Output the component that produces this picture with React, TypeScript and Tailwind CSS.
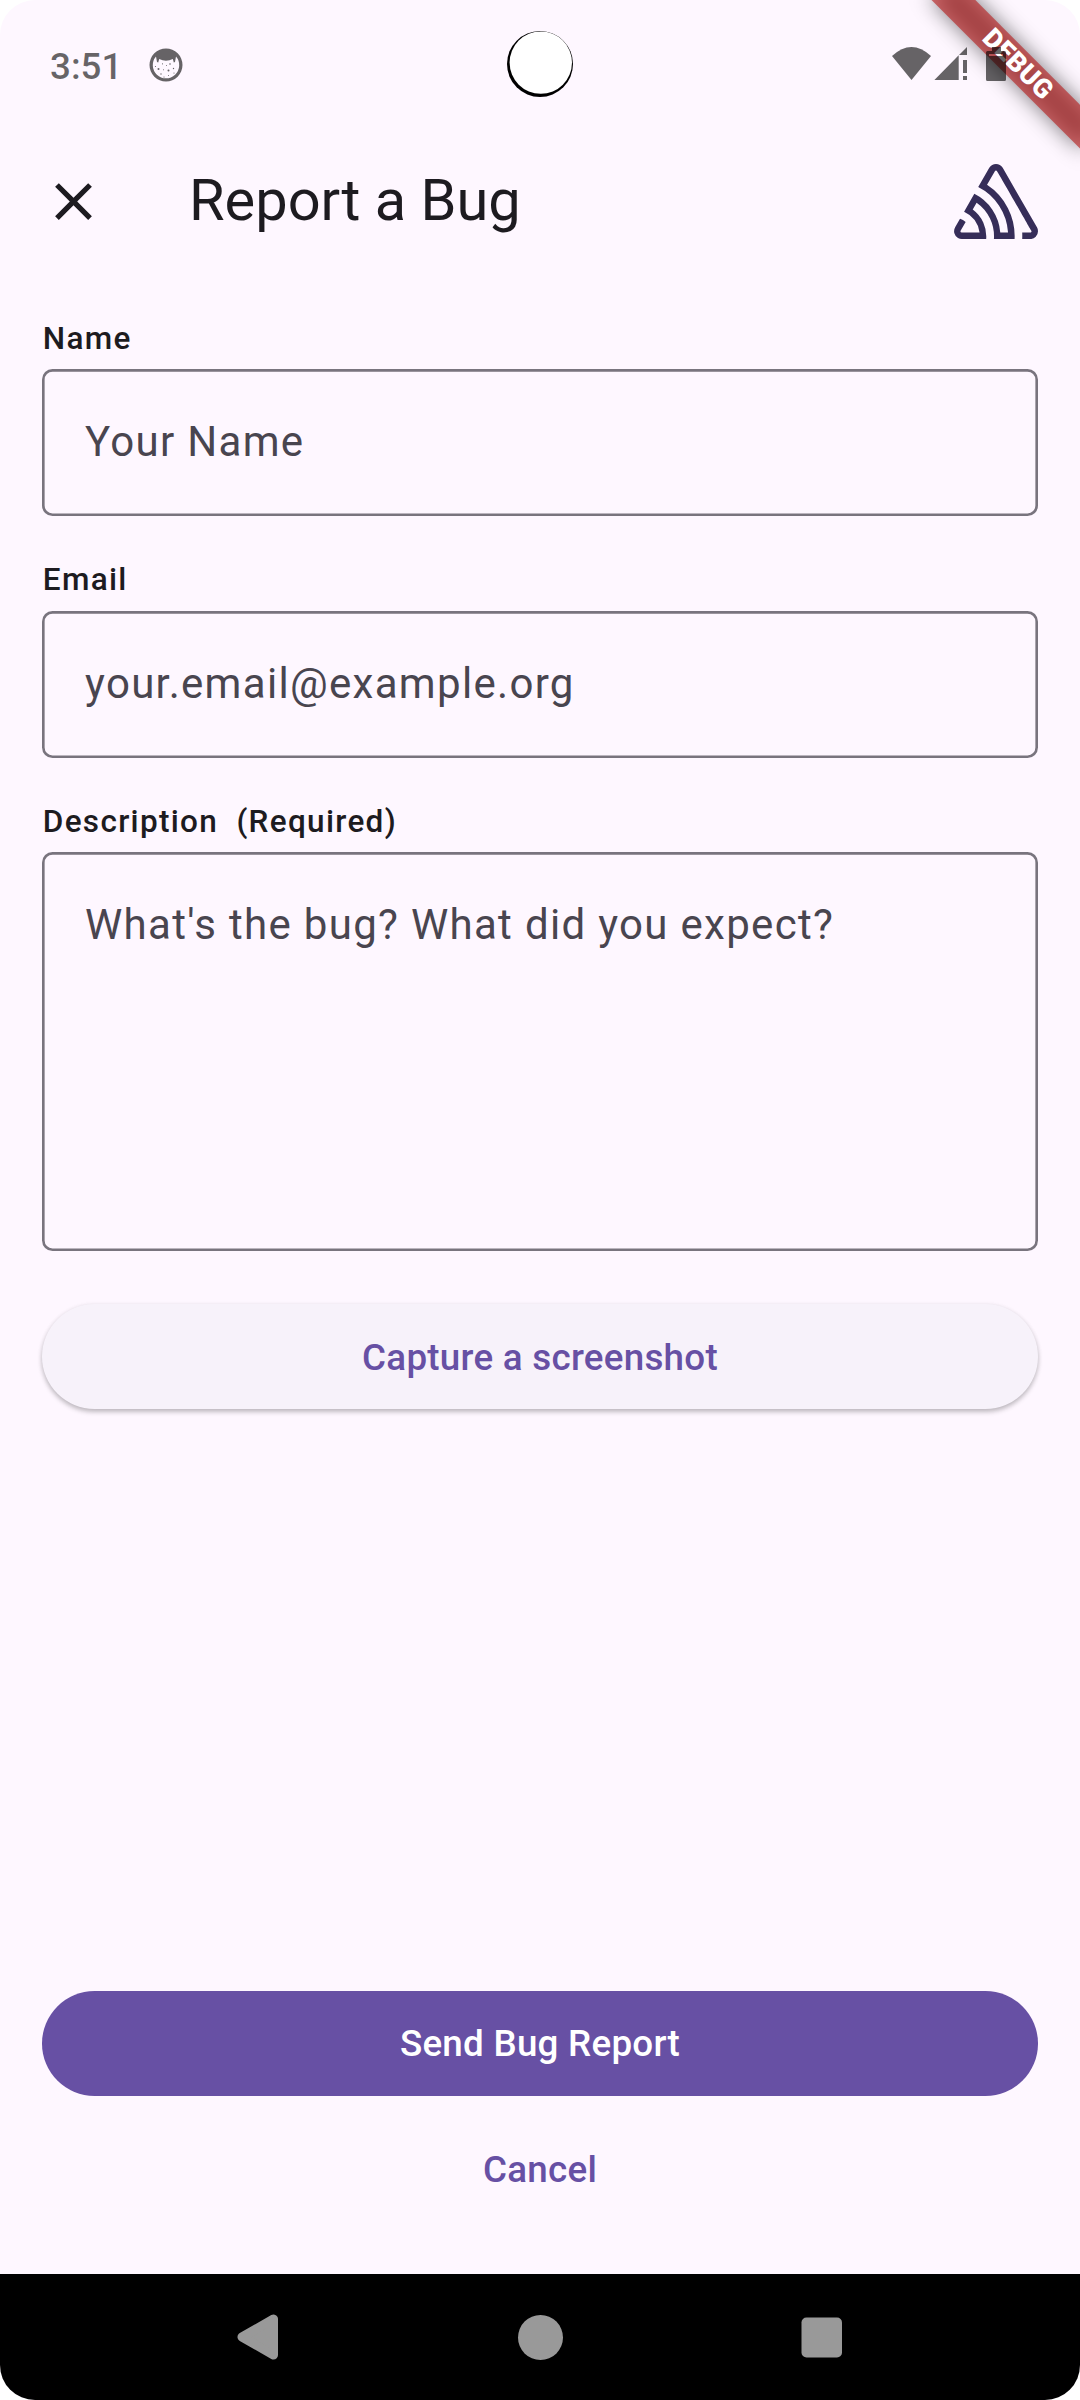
import React from "react";

const inkOverlay = "rgba(0,0,0,0.6)";

function DebugBanner() {
  return (
    <div className="pointer-events-none absolute right-0 top-0 h-[300px] w-[300px] overflow-hidden">
      <div className="absolute left-[300px] top-0 h-0 w-0 rotate-45">
        <div className="absolute left-[-105px] top-[73.5px] h-[31.5px] w-[210px] bg-black/50 blur-[10.4px]" />
        <div className="absolute left-[-105px] top-[73.5px] flex h-[31.5px] w-[210px] items-center justify-center bg-[#b71c1ca0] pl-[3px] text-[26.775px] font-black leading-none tracking-[0.3px] text-white">
          DEBUG
        </div>
      </div>
    </div>
  );
}

function StatusBar() {
  return (
    <div className="relative flex h-[128px] shrink-0 items-center pl-[50px]">
      <span className="pt-[5px] text-[36.75px] font-medium leading-[43px] text-black/60">3:51</span>
      <svg className="absolute left-[144px] top-[42px]" width="44" height="44" viewBox="0 0 44 44" fill={inkOverlay}>
        <path
          fillRule="evenodd"
          d="M22 6.5A16.5 16.5 0 1 1 22 39.5A16.5 16.5 0 1 1 22 6.5ZM12 14.5A13.2 13.2 0 1 0 32 14.5L31 20L29.8 20.5L28.8 17Q22 20.5 15.2 17L14.2 20.5L13 20Z"
        />
        <circle cx="14.5" cy="27" r="1" />
        <circle cx="24.5" cy="28.5" r="1" />
        <circle cx="26" cy="22" r="0.8" />
        <circle cx="18.5" cy="21.8" r="0.6" />
        <circle cx="17" cy="32" r="0.7" />
        <circle cx="20" cy="35" r="0.6" />
        <circle cx="29.5" cy="26.5" r="0.7" />
        <circle cx="22.5" cy="23.6" r="0.5" />
        <circle cx="30" cy="31" r="0.6" />
        <circle cx="19.5" cy="27.8" r="0.5" />
        <circle cx="11.5" cy="24.5" r="0.6" />
        <circle cx="24.5" cy="33.5" r="0.5" />
      </svg>
      <svg className="absolute left-[507px] top-[31px]" width="66" height="66" viewBox="0 0 66 66">
        <circle cx="33" cy="33" r="33" fill="#000" />
        <circle cx="33.8" cy="31.6" r="31.2" fill="#fff" />
      </svg>
      <svg className="absolute left-[886px] top-[36px]" width="130" height="54" viewBox="886 36 130 54" fill={inkOverlay}>
        <path d="M892 56 Q911.5 38 931 56 L911.5 80 Z" />
        <path d="M934.4 80 L958.7 55.3 V80 Z M959 55 L967 47 V55 Z M963 60 H967 V73 H963 Z M963 76 H967 V80 H963 Z" />
        <path
          fillRule="evenodd"
          d="M987.5 51 H992 V47 H1001 V51 H1004.5 Q1006 51 1006 52.5 V79.5 Q1006 81 1004.5 81 H987.5 Q986 81 986 79.5 V52.5 Q986 51 987.5 51 Z M989 54 V56 H1003 V54 Z"
        />
      </svg>
    </div>
  );
}

function Label({ children }: { children: React.ReactNode }) {
  return (
    <div className="mb-[10.5px] h-[42px] whitespace-pre pl-[0.8px] pt-[1.3px] text-[31.5px] font-medium leading-[41.4px] tracking-[1.3125px] text-[#1d1b20]">
      {children}
    </div>
  );
}

const outline =
  "rounded-[10.5px] px-[43px] text-[42px] tracking-[1.3125px] text-[#49454f] shadow-[inset_0_0_0_2.625px_#79747e]";

export default function App() {
  return (
    <div className="h-[2400px] w-[1080px] bg-white font-['Roboto',sans-serif]">
      <div className="relative flex h-full flex-col overflow-hidden rounded-[35px] bg-[#fef7ff]">
        <DebugBanner />
        <StatusBar />
        <header className="flex h-[147px] shrink-0 items-center pl-[42px] pr-[42px]">
          <svg width="63" height="63" viewBox="0 0 24 24" fill="#1d1b20">
            <path d="M19 6.41 17.59 5 12 10.59 6.41 5 5 6.41 10.59 12 5 17.59 6.41 19 12 13.41 17.59 19 19 17.59 13.41 12z" />
          </svg>
          <h1 className="mb-[2px] ml-[84px] flex-1 text-[57.75px] leading-[73.5px] text-[#1d1b20]">Report a Bug</h1>
          <svg width="84" height="75" viewBox="0 0 50 44" preserveAspectRatio="none" fill="#362d59">
            <path d="M29,2.26a4.67,4.67,0,0,0-8,0L14.42,13.53A32.21,32.21,0,0,1,32.17,40.19H27.55A27.68,27.68,0,0,0,12.09,17.47L6,28a15.92,15.92,0,0,1,9.23,12.17H4.62A.76.76,0,0,1,4,39.06l2.94-5a10.74,10.74,0,0,0-3.36-1.9l-2.91,5a4.54,4.54,0,0,0,1.69,6.24A4.66,4.66,0,0,0,4.62,44H19.15a19.4,19.4,0,0,0-8-17.31l2.31-4A23.87,23.87,0,0,1,23.76,44H36.07a35.88,35.88,0,0,0-16.41-31.8l4.67-8a.77.77,0,0,1,1.05-.27c.53.29,20.29,34.77,20.66,35.17a.76.76,0,0,1-.68,1.13H40.6q.09,1.91,0,3.81h4.78A4.59,4.59,0,0,0,50,39.43a4.49,4.49,0,0,0-.62-2.28Z" />
          </svg>
        </header>
        <main className="flex flex-1 flex-col px-[42px] pt-[41.5px]">
          <Label>Name</Label>
          <div className={outline + " mb-[42px] h-[147px] py-[40.5px] leading-[63px]"}>Your Name</div>
          <Label>Email</Label>
          <div className={outline + " mb-[42px] h-[147px] py-[41.5px] leading-[63px]"}>your.email@example.org</div>
          <Label>{"Description  (Required)"}</Label>
          <div className={outline + " h-[399px] py-[40.5px] leading-[63px]"}>What's the bug? What did you expect?</div>
          <button className="mt-[52.5px] h-[105px] rounded-full bg-[#f7f2fa] pt-[3px] text-[36.75px] font-medium tracking-[0.2625px] text-[#6750a4] shadow-[0_3px_5px_rgba(0,0,0,0.22),0_1px_5px_rgba(0,0,0,0.08)]">
            Capture a screenshot
          </button>
          <div className="flex-1" />
          <button className="h-[105px] rounded-full bg-[#6750a4] pt-[2px] text-[36.75px] font-medium tracking-[0.2625px] text-white">
            Send Bug Report
          </button>
          <button className="mb-[52.5px] mt-[21px] h-[105px] pt-[2px] text-[36.75px] font-medium tracking-[0.2625px] text-[#6750a4]">
            Cancel
          </button>
        </main>
        <nav className="flex h-[126px] shrink-0 items-center justify-center bg-black">
          <svg width="1080" height="126" viewBox="0 2274 1080 126" fill="#999999">
            <path d="M242 2337 L273.5 2319 V2355 Z" stroke="#999999" strokeWidth="9" strokeLinejoin="round" />
            <circle cx="540.5" cy="2337.5" r="22.5" />
            <rect x="801.5" y="2317.5" width="40.5" height="40" rx="5" />
          </svg>
        </nav>
      </div>
    </div>
  );
}
